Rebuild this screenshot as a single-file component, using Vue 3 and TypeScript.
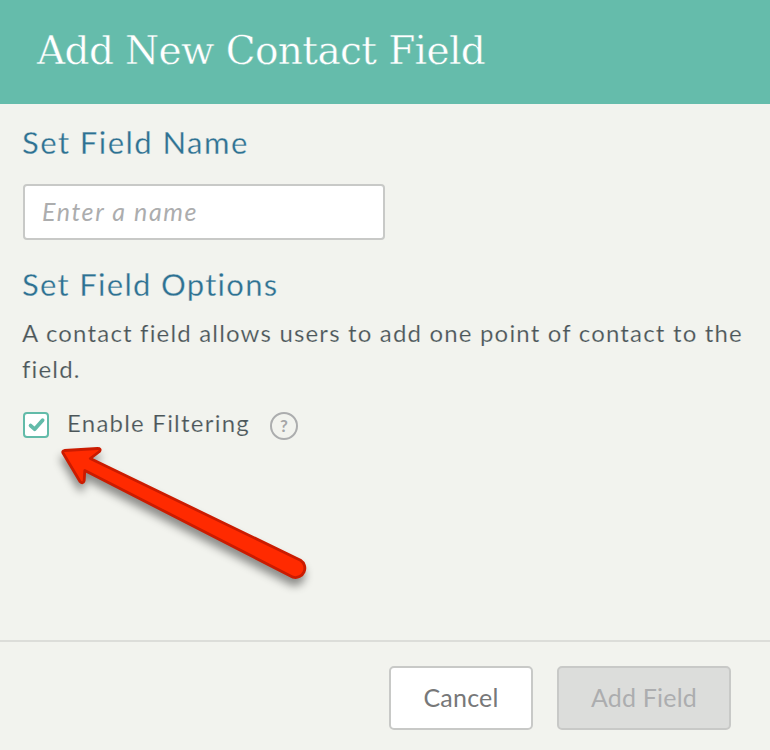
<script setup lang="ts">
import { ref } from 'vue'

const fieldName = ref<string>('')
const filtering = ref<boolean>(true)
</script>

<template>
  <div class="dialog">
    <header class="header">
      <h1 class="title">Add New Contact Field</h1>
    </header>

    <main class="body">
      <h2 class="heading">Set Field Name</h2>
      <input v-model="fieldName" class="name-input" type="text" placeholder="Enter a name" />

      <h2 class="heading options">Set Field Options</h2>
      <p class="description">A contact field allows users to add one point of contact to the field.</p>

      <div class="option-row">
        <button class="checkbox" type="button" role="checkbox" :aria-checked="filtering" @click="filtering = !filtering">
          <svg v-if="filtering" width="22" height="22" viewBox="0 0 22 22">
            <path d="M5.6 11.6 L9.6 15.2 L17.6 6.2" fill="none" stroke="#62bba9" stroke-width="3.8" stroke-linecap="round" stroke-linejoin="round" />
          </svg>
        </button>
        <span class="option-label">Enable Filtering</span>
        <span class="help">?</span>
      </div>

      <svg class="arrow" width="290" height="170" viewBox="40 430 290 170">
        <path
          d="M64.5 450.5 L97.5 448.5 Q101.5 448.5 99.5 451.5 L90.3 458.5 L300.5 560.2 A9.4 9.4 0 0 1 293 577.2 L84.8 470.5 L84.2 480.5 Q83 484.5 80 481.5 L63 453 Q62 451 64.5 450.5 Z"
          fill="#ff2a00"
          stroke="#cb1b00"
          stroke-width="2.8"
          stroke-linejoin="round"
        />
      </svg>
    </main>

    <footer class="footer">
      <button class="btn cancel" type="button">Cancel</button>
      <button class="btn add" type="button" disabled>Add Field</button>
    </footer>
  </div>
</template>

<style>
body {
  margin: 0;
}
</style>

<style scoped>
.dialog {
  position: relative;
  box-sizing: border-box;
  display: flex;
  flex-direction: column;
  width: 770px;
  height: 750px;
  overflow: hidden;
  background: #f2f3ee;
  color: #4b5659;
  font-family: Lato, "Liberation Sans", sans-serif;
}

.header {
  box-sizing: border-box;
  height: 104px;
  padding: 26px 37px 0;
  background: #65bcab;
}

.title {
  margin: 0;
  color: #fff;
  font: 400 39px/50px "DejaVu Serif", serif;
  letter-spacing: -0.6px;
  white-space: nowrap;
  -webkit-text-stroke: 0.4px #65bcab;
}

.body {
  flex: 1;
  padding: 18px 22px 0;
}

.heading {
  margin: 0;
  color: #2d7192;
  font-size: 31px;
  font-weight: 400;
  line-height: 40px;
  letter-spacing: 1.45px;
  -webkit-text-stroke: 0.3px #f2f3ee;
}

.name-input {
  box-sizing: border-box;
  display: block;
  width: 362px;
  height: 56px;
  margin: 22px 0 0 1px;
  padding: 0 17px 3px;
  border: 2px solid #c8c9c7;
  border-radius: 4px;
  outline: none;
  background: #fff;
  color: #4b5659;
  font: 400 25px Lato, sans-serif;
  letter-spacing: 1.6px;
}

.name-input::placeholder {
  color: #acadae;
  font-style: italic;
  opacity: 1;
}

.options {
  margin-top: 24px;
  letter-spacing: 1.3px;
}

.description {
  margin: 11px 0 0;
  font-size: 24px;
  line-height: 36px;
  letter-spacing: 1.17px;
  -webkit-text-stroke: 0.2px #f2f3ee;
}

.option-row {
  display: flex;
  align-items: flex-start;
  margin: 25px 0 0 1px;
}

.checkbox {
  box-sizing: border-box;
  width: 26px;
  height: 26px;
  padding: 0;
  border: 2px solid #62bba9;
  border-radius: 4px;
  background: #fff;
}

.checkbox svg {
  display: block;
}

.option-label {
  width: 185px;
  margin: -1px 0 0 18px;
  font-size: 24px;
  line-height: 24px;
  letter-spacing: 1.23px;
  white-space: nowrap;
  -webkit-text-stroke: 0.2px #f2f3ee;
}

.help {
  box-sizing: border-box;
  width: 28px;
  height: 28px;
  margin-left: 18px;
  border: 2px solid #acadae;
  border-radius: 50%;
  color: #a5a6a7;
  font-size: 17px;
  font-weight: 700;
  line-height: 24px;
  text-align: center;
}

.arrow {
  position: absolute;
  left: 40px;
  top: 430px;
  filter: drop-shadow(-1px 7px 4px rgba(0, 0, 0, 0.42));
  pointer-events: none;
}

.footer {
  box-sizing: border-box;
  display: flex;
  justify-content: flex-end;
  gap: 24px;
  height: 110px;
  padding: 24px 39px 0 0;
  border-top: 2px solid #dcddd9;
}

.btn {
  box-sizing: border-box;
  height: 64px;
  padding: 0 0 2px;
  border: 2px solid #c8c9c7;
  border-radius: 5px;
  font: 400 25px Lato, sans-serif;
  letter-spacing: 0.2px;
}

.cancel {
  width: 144px;
  background: #fff;
  color: #777879;
}

.add {
  width: 174px;
  background: #dcdddb;
  color: #acadaf;
}
</style>
